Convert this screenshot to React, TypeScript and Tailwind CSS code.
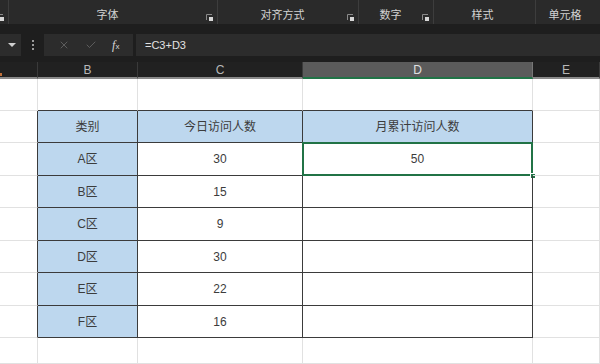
import React from "react";
import { X, Check } from "lucide-react";

const cols = ["w-[38px]", "w-[100px]", "w-[165px]", "w-[230px]", "flex-1"];

const rows = [
    { h: "h-[33px]", cat: "A区", today: "30", month: "50" },
    { h: "h-[32px]", cat: "B区", today: "15", month: "" },
    { h: "h-[33px]", cat: "C区", today: "9", month: "" },
    { h: "h-[32px]", cat: "D区", today: "30", month: "" },
    { h: "h-[33px]", cat: "E区", today: "22", month: "" },
    { h: "h-[32px]", cat: "F区", today: "16", month: "" },
];

function Launcher() {
    return (
        <svg width="7" height="7" viewBox="0 0 7 7" className="shrink-0">
            <path d="M0.5 6V0.5H6" stroke="#8a8a8a" strokeWidth="1" fill="none" />
            <rect x="3" y="3" width="4" height="4" fill="#d6d6d6" />
        </svg>
    );
}

function Group({ w, label, launcher = true }: { w: string; label: string; launcher?: boolean }) {
    return (
        <div className={`${w} h-full flex items-center border-r border-[#3d3d3d] pr-[4px]`}>
            <div className="flex-1 text-center text-[11px] leading-[14px] pt-[6px] text-[#d2d2d2]">{label}</div>
            {launcher && <div className="pt-[10px]"><Launcher /></div>}
        </div>
    );
}

function Ribbon() {
    return (
        <div className="h-[24px] bg-[#2a2a2a] flex shrink-0">
            <div className="w-[9px] h-full flex items-center border-r border-[#3d3d3d]">
                <div className="pt-[10px] -ml-[3px]"><Launcher /></div>
            </div>
            <Group w="w-[209px]" label="字体" />
            <Group w="w-[141px]" label="对齐方式" />
            <Group w="w-[75px]" label="数字" />
            <Group w="w-[102px]" label="样式" launcher={false} />
            <div className="flex-1 h-full flex items-center">
                <div className="flex-1 text-center text-[11px] leading-[14px] pt-[6px] pr-[6px] text-[#d2d2d2]">单元格</div>
            </div>
        </div>
    );
}

function FormulaBar() {
    return (
        <div className="h-[38px] bg-[#1e1e1e] flex items-center pt-[6px] pb-[2px] shrink-0">
            <div className="w-[21px] h-[22px] bg-[#2c2c2c] flex items-center justify-end pr-[5px]">
                <div className="w-0 h-0 border-l-[4px] border-r-[4px] border-t-[4px] border-l-transparent border-r-transparent border-t-[#d0d0d0]" />
            </div>
            <div className="w-[23px] flex flex-col items-center gap-[2px]">
                <div className="w-[2px] h-[2px] bg-[#9a9a9a]" />
                <div className="w-[2px] h-[2px] bg-[#9a9a9a]" />
                <div className="w-[2px] h-[2px] bg-[#9a9a9a]" />
            </div>
            <div className="w-[89px] h-[22px] bg-[#2c2c2c] flex items-center justify-around px-[6px]">
                <X size={12} strokeWidth={1.5} color="#6e6e6e" />
                <Check size={12} strokeWidth={1.5} color="#6e6e6e" />
                <span className="text-[#d8d8d8] font-['Liberation_Serif',serif] italic text-[12px] leading-none">
                    f<span className="text-[8px] not-italic font-['Liberation_Sans',sans-serif]">x</span>
                </span>
            </div>
            <div className="flex-1 h-[22px] ml-[3px] bg-[#2c2c2c] flex items-center pl-[9px] text-[11px] text-[#e2e2e2]">
                =C3+D3
            </div>
        </div>
    );
}

function ColumnHeaders() {
    const letters = ["", "B", "C", "D", "E"];
    return (
        <div className="h-[17px] bg-[#212121] flex shrink-0">
            {letters.map((l, i) =>
                i === 3 ? (
                    <div key={i} className={`${cols[i]} h-full bg-[#5b5b5b] border-r border-[#777] border-b-2 border-b-[#217346] flex items-center justify-center text-[12px] text-[#e0e0e0]`}>
                        {l}
                    </div>
                ) : (
                    <div key={i} className={`${cols[i]} h-full border-r border-[#3a3a3a] border-b-2 border-b-[#8a8a8a] flex items-center justify-center text-[12px] text-[#b8b8b8] relative`}>
                        {i === 0 && <div className="absolute left-0 bottom-[1px] w-[2px] h-[3px] bg-[#c0703a]" />}
                        {l}
                    </div>
                )
            )}
        </div>
    );
}

const light = "border-r border-b border-[#e1e1e1]";
const dark = "border-r border-b border-[#3b3b3b]";

function Cell({ w, h, cls, children }: { w: string; h: string; cls: string; children?: React.ReactNode }) {
    return (
        <div className={`${w} ${h} ${cls} flex items-center justify-center text-[12px] text-[#3c3c3c] relative`}>
            {children}
        </div>
    );
}

export default function App() {
    return (
        <div className="w-[600px] h-[364px] overflow-hidden flex flex-col bg-white font-['Liberation_Sans','Noto_Sans_CJK_SC',sans-serif]">
            <Ribbon />
            <FormulaBar />
            <ColumnHeaders />

            <div className="flex h-[32px]">
                <Cell w={cols[0]} h="h-full" cls={light} />
                <Cell w={cols[1]} h="h-full" cls="border-r border-[#e1e1e1] border-b border-b-[#3b3b3b]" />
                <Cell w={cols[2]} h="h-full" cls="border-r border-[#e1e1e1] border-b border-b-[#3b3b3b]" />
                <Cell w={cols[3]} h="h-full" cls="border-r border-[#e1e1e1] border-b border-b-[#3b3b3b]" />
                <Cell w={cols[4]} h="h-full" cls={light} />
            </div>

            <div className="flex h-[32px]">
                <Cell w={cols[0]} h="h-full" cls="border-b border-[#e1e1e1] border-r border-r-[#3b3b3b]" />
                <Cell w={cols[1]} h="h-full" cls={`${dark} bg-[#bdd7ee]`}>类别</Cell>
                <Cell w={cols[2]} h="h-full" cls={`${dark} bg-[#bdd7ee]`}>今日访问人数</Cell>
                <Cell w={cols[3]} h="h-full" cls={`${dark} bg-[#bdd7ee]`}>月累计访问人数</Cell>
                <Cell w={cols[4]} h="h-full" cls={light} />
            </div>

            {rows.map((r, i) => (
                <div key={r.cat} className={`flex ${r.h}`}>
                    <Cell w={cols[0]} h="h-full" cls="border-b border-[#e1e1e1] border-r border-r-[#3b3b3b]" />
                    <Cell w={cols[1]} h="h-full" cls={`${dark} bg-[#bdd7ee]`}>{r.cat}</Cell>
                    <Cell w={cols[2]} h="h-full" cls={dark}>{r.today}</Cell>
                    <Cell w={cols[3]} h="h-full" cls={dark}>
                        {r.month}
                        {i === 0 && (
                            <>
                                <div className="absolute -left-[1px] -top-[1px] -right-[1px] -bottom-[1px] border-2 border-[#217346]" />
                                <div className="absolute -right-[4px] -bottom-[4px] w-[6px] h-[6px] bg-[#217346] border border-white" />
                            </>
                        )}
                    </Cell>
                    <Cell w={cols[4]} h="h-full" cls={light} />
                </div>
            ))}

            <div className="flex flex-1">
                <Cell w={cols[0]} h="h-full" cls={light} />
                <Cell w={cols[1]} h="h-full" cls={light} />
                <Cell w={cols[2]} h="h-full" cls={light} />
                <Cell w={cols[3]} h="h-full" cls={light} />
                <Cell w={cols[4]} h="h-full" cls={light} />
            </div>
        </div>
    );
}
